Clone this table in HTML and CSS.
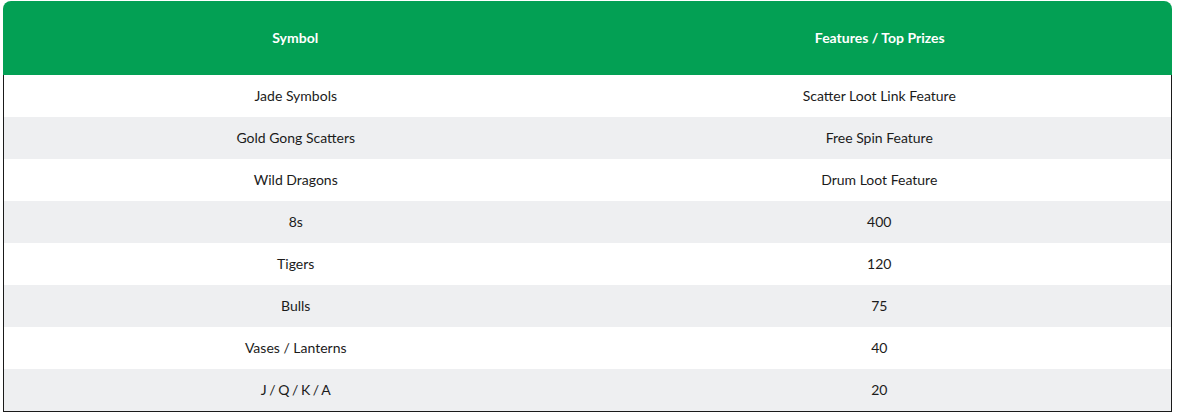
FILE: index.html
```html
<!DOCTYPE html>
<html>
<head>
<meta charset="utf-8">
<link rel="stylesheet" href="styles.css">
</head>
<body>
<div class="table">
  <div class="head">
    <div class="cell">Symbol</div>
    <div class="cell">Features / Top Prizes</div>
  </div>
  <div class="body">
    <div class="row"><div class="cell">Jade Symbols</div><div class="cell">Scatter Loot Link Feature</div></div>
    <div class="row alt"><div class="cell">Gold Gong Scatters</div><div class="cell">Free Spin Feature</div></div>
    <div class="row"><div class="cell">Wild Dragons</div><div class="cell">Drum Loot Feature</div></div>
    <div class="row alt"><div class="cell">8s</div><div class="cell">400</div></div>
    <div class="row"><div class="cell">Tigers</div><div class="cell">120</div></div>
    <div class="row alt"><div class="cell">Bulls</div><div class="cell">75</div></div>
    <div class="row"><div class="cell">Vases / Lanterns</div><div class="cell">40</div></div>
    <div class="row alt"><div class="cell tight">J / Q / K / A</div><div class="cell">20</div></div>
  </div>
</div>
</body>
</html>
```
FILE: styles.css
```css
html, body { margin: 0; padding: 0; background: #fff; }
body { font-family: Lato, "Noto Sans", sans-serif; color: #1b1b1b; }
.table { margin: 1px 6px 0 3px; width: 1169px; }
.head {
  display: grid; grid-template-columns: 1fr 1fr;
  background: #03a054; color: #fff; height: 74px;
  border-radius: 8px 8px 0 0; font-weight: 700; font-size: 14px;
}
.head .cell { display: flex; align-items: center; justify-content: center; padding-bottom: 1px; }
.body { border: 1px solid #1a1a1a; border-top: none; }
.row { display: grid; grid-template-columns: 1fr 1fr; height: 42px; font-size: 14px; }
.row.alt { background: #eeeff1; }
.row .cell { display: flex; align-items: center; justify-content: center; padding-bottom: 2px; }
.row .cell.tight { word-spacing: -1px; }
```
